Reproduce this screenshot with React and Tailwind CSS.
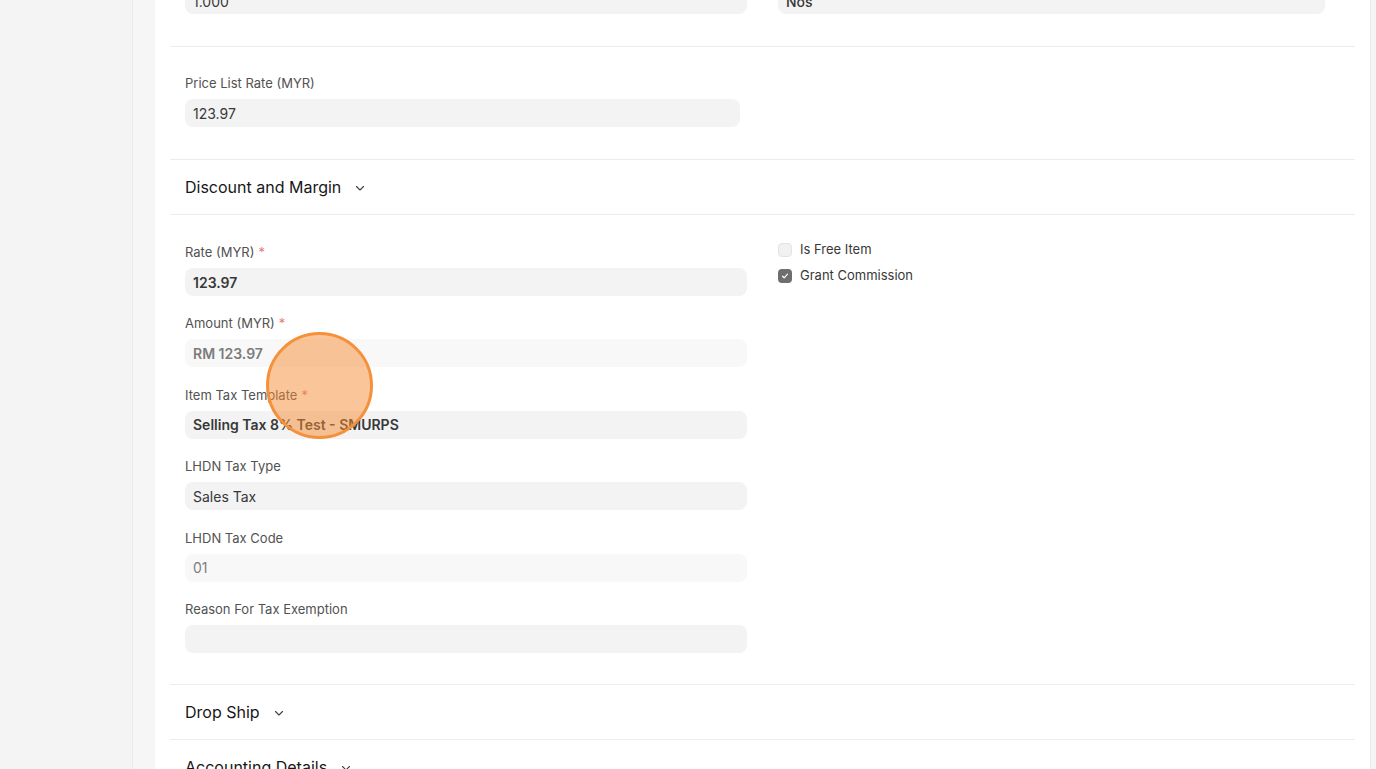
import React from "react";

function Label({ children, req }) {
  return (
    <div className="h-4 mb-2 text-[13px] leading-4 text-[#525252]">
      {children}
      {req && <span className="ml-1 text-[#e87b7b]">*</span>}
    </div>
  );
}

function Field({ label, req, value, bold, readOnly, w = "w-[562px]" }) {
  return (
    <div className="mb-[19.4px]">
      <Label req={req}>{label}</Label>
      <div
        className={`${w} h-7 rounded-lg px-2 flex items-center text-[14px] ${
          readOnly ? "bg-[#f8f8f8] text-[#7c7c7c]" : "bg-[#f3f3f3] text-[#383838]"
        } ${bold ? "font-semibold" : ""}`}
      >
        {value}
      </div>
    </div>
  );
}

function Chevron() {
  return (
    <svg width="12" height="12" viewBox="0 0 12 12" fill="none" className="ml-[13px] mt-[2px]">
      <path d="M2.5 4.5 L6 8 L9.5 4.5" stroke="#404040" strokeWidth="1.1" strokeLinecap="round" strokeLinejoin="round" />
    </svg>
  );
}

function SectionHead({ title }) {
  return (
    <div className="h-[55px] border-b border-[#ededed] px-[15px] flex items-center">
      <span className="text-[16px] text-[#171717] font-normal">{title}</span>
      <Chevron />
    </div>
  );
}

function Check({ checked, label }) {
  return (
    <div className="flex items-center h-[26px]">
      {checked ? (
        <div className="w-[14px] h-[14px] rounded-[4px] bg-[#6e6e6e] flex items-center justify-center">
          <svg width="8" height="8" viewBox="0 0 8 8" fill="none">
            <path d="M1.5 4.2 L3.2 5.8 L6.5 2.2" stroke="white" strokeWidth="1.2" strokeLinecap="round" strokeLinejoin="round" />
          </svg>
        </div>
      ) : (
        <div className="w-[14px] h-[14px] rounded-[4px] bg-[#f1f1f1] border border-[#e3e3e3]" />
      )}
      <span className="ml-2 text-[13px] text-[#383838]">{label}</span>
    </div>
  );
}

export default function App() {
  return (
    <div
      className="relative flex h-[769px] w-[1376px] overflow-hidden bg-[#f4f4f4]"
      style={{ fontFamily: "Inter, 'Noto Sans', sans-serif" }}
    >
      <div className="w-[133px] shrink-0 border-r border-[#ebebeb] bg-[#f4f4f4]" />
      <div className="w-[22px] shrink-0 bg-[#f6f6f6]" />
      <div className="w-[1215px] shrink-0 bg-white px-[15px]">
        {/* top section (scrolled) */}
        <div className="border-b border-[#ededed] px-[15px] pb-[32px]">
          <div className="flex gap-x-[31px] -mt-[14px]">
            <div className="w-[562px] h-7 rounded-lg bg-[#f3f3f3] px-2 pt-[3px] flex items-center text-[14px] text-[#383838]">
              1.000
            </div>
            <div className="w-[547px] h-7 rounded-lg bg-[#f3f3f3] px-2 pt-[3px] flex items-center text-[14px] font-medium text-[#383838]">
              Nos
            </div>
          </div>
        </div>

        {/* price list */}
        <div className="border-b border-[#ededed] px-[15px] pt-[28px] pb-[32px]">
          <Label>Price List Rate (MYR)</Label>
          <div className="w-[555px] h-7 rounded-lg bg-[#f3f3f3] px-2 flex items-center text-[14px] text-[#383838]">
            123.97
          </div>
        </div>

        <SectionHead title="Discount and Margin" />

        <div className="border-b border-[#ededed] px-[15px] pt-[29px] pb-[11.6px] flex gap-x-[31px]">
          <div className="w-[562px]">
            <Field label="Rate (MYR)" req value="123.97" bold />
            <Field label="Amount (MYR)" req value="RM 123.97" bold readOnly />
            <Field label="Item Tax Template" req value="Selling Tax 8% Test - SMURPS" bold />
            <Field label="LHDN Tax Type" value="Sales Tax" readOnly={false} />
            <Field label="LHDN Tax Code" value="01" readOnly />
            <Field label="Reason For Tax Exemption" value="" />
          </div>
          <div className="-mt-[7px]">
            <Check label="Is Free Item" />
            <Check checked label="Grant Commission" />
          </div>
        </div>

        <SectionHead title="Drop Ship" />
        <SectionHead title="Accounting Details" />
      </div>
      <div className="w-[6px] shrink-0 border-l border-[#ebebeb] bg-[#f4f4f4]" />

      {/* click indicator overlay */}
      <div className="absolute left-[266px] top-[332px] w-[107px] h-[107px] rounded-full border-[3px] border-[#f4913a] bg-[rgba(245,140,50,0.5)]" />
    </div>
  );
}
